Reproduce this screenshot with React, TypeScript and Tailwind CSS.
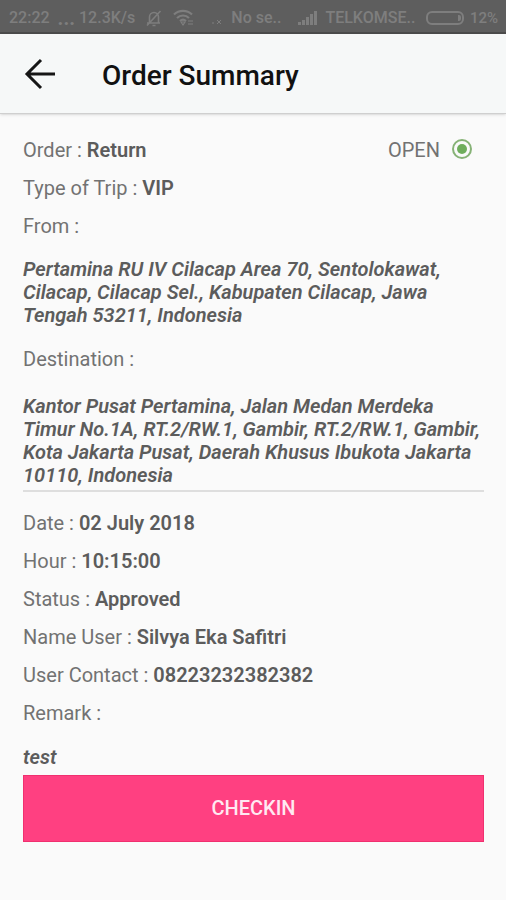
import type { ReactNode } from 'react'

const schedule = [
  { label: 'Date', value: '02 July 2018' },
  { label: 'Hour', value: '10:15:00' },
  { label: 'Status', value: 'Approved' },
  { label: 'Name User', value: 'Silvya Eka Safitri' },
  { label: 'User Contact', value: '08223232382382' },
]

function StatusBar() {
  return (
    <div className="flex h-[34px] items-center border-b-2 border-[#4c4c4c] bg-[#5e5e5e] pt-1 pr-2 pl-[9px] text-[16px] leading-5 font-medium whitespace-nowrap text-[#7e7e7e]">
      <span>22:22</span>
      <span className="ml-2 text-[20px] font-bold">...</span>
      <span className="ml-1">12.3K/s</span>
      <svg
        aria-hidden
        className="ml-[10px] h-[18px] w-[18px] shrink-0"
        viewBox="0 0 18 18"
        fill="none"
        stroke="currentColor"
        strokeWidth="1.6"
      >
        <path d="M2 14h13M4.5 14V8a4.5 4.5 0 0 1 9 0v6M7.5 16.5h3M2 16.5 15.5 2" />
      </svg>
      <svg
        aria-hidden
        className="ml-[10px] h-[18px] w-[22px] shrink-0"
        viewBox="0 0 22 18"
        fill="none"
        stroke="currentColor"
        strokeWidth="2.2"
      >
        <path d="M1 5.5a13 13 0 0 1 18 0M4 9a8.5 8.5 0 0 1 12 0M7 12a4.5 4.5 0 0 1 6 0" />
        <path d="m8 13 2 3 2-3zM15 12h5M15 15h5" strokeWidth="1.2" />
      </svg>
      <svg
        aria-hidden
        className="ml-4 h-4 w-3 shrink-0"
        viewBox="0 0 12 16"
        fill="none"
        stroke="currentColor"
      >
        <path d="M2 12v2M6 10l4 4M10 10l-4 4" />
      </svg>
      <span className="ml-2">No se..</span>
      <svg
        aria-hidden
        className="ml-4 h-4 w-[22px] shrink-0"
        viewBox="0 0 22 16"
        fill="currentColor"
      >
        <path d="M1 12h3v3H1zM5 10h3v5H5zM9 7h3v8H9zM13 4h3v11h-3zM17 1h3v14h-3z" />
      </svg>
      <span className="ml-[6px]">TELKOMSE..</span>
      <svg
        aria-hidden
        className="ml-auto h-4 w-[38px] shrink-0"
        viewBox="0 0 38 16"
        fill="none"
        stroke="currentColor"
        strokeWidth="2"
      >
        <rect x="1" y="2" width="36" height="12" rx="5" />
        <path d="M32 5h1a2 2 0 0 1 2 2v2a2 2 0 0 1-2 2h-1z" fill="currentColor" stroke="none" />
      </svg>
      <span className="ml-[6px] text-[15px]">12%</span>
    </div>
  )
}

function Row({ label, children }: { label: string; children?: ReactNode }) {
  return (
    <p>
      {label} : {children ? <b className="font-semibold text-[#5c5c5c]">{children}</b> : null}
    </p>
  )
}

function Note({ children }: { children: ReactNode }) {
  return <p className="font-semibold text-[#5c5c5c] italic">{children}</p>
}

export default function App() {
  return (
    <div className="min-h-screen bg-[#fafafa] font-[Roboto,sans-serif]">
      <StatusBar />
      <header className="flex h-20 items-center border-b border-[#cfcfcf] bg-[#f6f8f8] pl-6 shadow-sm">
        <button type="button" aria-label="Back" className="text-[#161616]">
          <svg
            aria-hidden
            className="h-8 w-8"
            viewBox="0 0 32 32"
            fill="none"
            stroke="currentColor"
            strokeWidth="3"
          >
            <path d="M31 16H3M17 2 3 16l14 14" />
          </svg>
        </button>
        <h1 className="ml-[46px] pt-1 text-[28px] leading-8 font-medium text-[#111111]">
          Order Summary
        </h1>
      </header>

      <main className="pt-[25px] pr-[22px] pl-[23px] text-[20px] leading-[23px] text-[#727272]">
        <div className="flex flex-col gap-[15px]">
          <div className="flex items-center justify-between pr-3">
            <Row label="Order">Return</Row>
            <label className="flex items-start gap-3">
              OPEN
              <input
                type="radio"
                name="order-state"
                defaultChecked
                className="h-5 w-5 appearance-none rounded-full border-2 border-[#86b276] bg-[#6fad5c] bg-clip-content p-[3px]"
              />
            </label>
          </div>
          <Row label="Type of Trip">VIP</Row>
          <Row label="From" />
        </div>

        <div className="mt-5">
          <Note>
            Pertamina RU IV Cilacap Area 70, Sentolokawat, Cilacap, Cilacap Sel., Kabupaten
            Cilacap, Jawa Tengah 53211, Indonesia
          </Note>
        </div>
        <div className="mt-[21px] flex flex-col gap-6">
          <Row label="Destination" />
          <Note>
            Kantor Pusat Pertamina, Jalan Medan Merdeka Timur No.1A, RT.2/RW.1, Gambir,
            RT.2/RW.1, Gambir, Kota Jakarta Pusat, Daerah Khusus Ibukota Jakarta 10110,
            Indonesia
          </Note>
        </div>

        <hr className="mt-[3px] border-t-2 border-[#dedede]" />

        <div className="mt-5 flex flex-col gap-[15px]">
          {schedule.map((item) => (
            <Row key={item.label} label={item.label}>
              {item.value}
            </Row>
          ))}
          <Row label="Remark" />
        </div>

        <div className="mt-[21px]">
          <Note>test</Note>
        </div>
        <button
          type="button"
          className="mt-[6px] h-[67px] w-full border border-[#f0306f] bg-[#ff4081] font-medium text-[#ffe9f1]"
        >
          CHECKIN
        </button>
      </main>
    </div>
  )
}
